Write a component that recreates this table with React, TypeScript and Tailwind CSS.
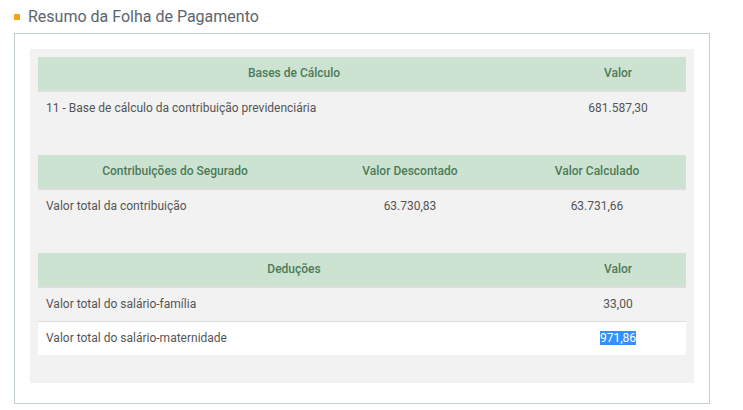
import React from "react";

const font = { fontFamily: "Roboto, 'Liberation Sans', sans-serif" };

function DataTable({
  cols,
  rows,
  last,
}: {
  cols: { label: string; w: number }[];
  rows: { cells: React.ReactNode[]; white?: boolean }[];
  last?: boolean;
}) {
  return (
    <table
      className={`w-full table-fixed border-separate border-spacing-0 text-[12px] ${last ? "mb-[20px]" : "mb-[30px]"}`}
    >
      <colgroup>
        {cols.map((c, i) => (
          <col key={i} style={{ width: c.w }} />
        ))}
      </colgroup>
      <thead>
        <tr className="bg-[#cce3d2]">
          {cols.map((c, i) => (
            <th
              key={i}
              className="px-[8px] py-[8px] text-center align-middle font-medium text-[#4d7a58] leading-[17px] border-b-2 border-[#dddddd]"
            >
              {c.label}
            </th>
          ))}
        </tr>
      </thead>
      <tbody>
        {rows.map((r, ri) => (
          <tr key={ri} className={r.white ? "bg-white" : ""}>
            {r.cells.map((cell, ci) => (
              <td
                key={ci}
                className={`px-[8px] py-[8px] align-middle text-[#555555] leading-[17px] ${
                  ci === 0 ? "text-left" : "text-center"
                } ${ri > 0 ? "border-t border-[#dddddd]" : ""}`}
              >
                {cell}
              </td>
            ))}
          </tr>
        ))}
      </tbody>
    </table>
  );
}

export default function App() {
  return (
    <div className="w-[743px] h-[410px] bg-white" style={font}>
      <div className="flex h-[33px] items-center pl-[14px]">
        <span className="mr-[8px] h-[6px] w-[6px] bg-[#f7a416]" />
        <span className="text-[16px] text-[#5b6570] leading-[20px]">
          Resumo da Folha de Pagamento
        </span>
      </div>
      <div className="ml-[14px] w-[696px] border border-[#c3cfd3] px-[15px] pt-[15px] pb-[20px]">
        <div className="bg-[#f2f2f2] px-[8px] pt-[8px] pb-[8px]">
          <DataTable
            cols={[
              { label: "Bases de Cálculo", w: 512 },
              { label: "Valor", w: 136 },
            ]}
            rows={[
              {
                cells: [
                  "11 - Base de cálculo da contribuição previdenciária",
                  "681.587,30",
                ],
              },
            ]}
          />
          <DataTable
            cols={[
              { label: "Contribuições do Segurado", w: 274 },
              { label: "Valor Descontado", w: 196 },
              { label: "Valor Calculado", w: 178 },
            ]}
            rows={[
              {
                cells: ["Valor total da contribuição", "63.730,83", "63.731,66"],
              },
            ]}
          />
          <DataTable
            last
            cols={[
              { label: "Deduções", w: 512 },
              { label: "Valor", w: 136 },
            ]}
            rows={[
              { cells: ["Valor total do salário-família", "33,00"] },
              {
                white: true,
                cells: [
                  "Valor total do salário-maternidade",
                  <span className="bg-[#3390ff] text-white">971,86</span>,
                ],
              },
            ]}
          />
        </div>
      </div>
    </div>
  );
}
